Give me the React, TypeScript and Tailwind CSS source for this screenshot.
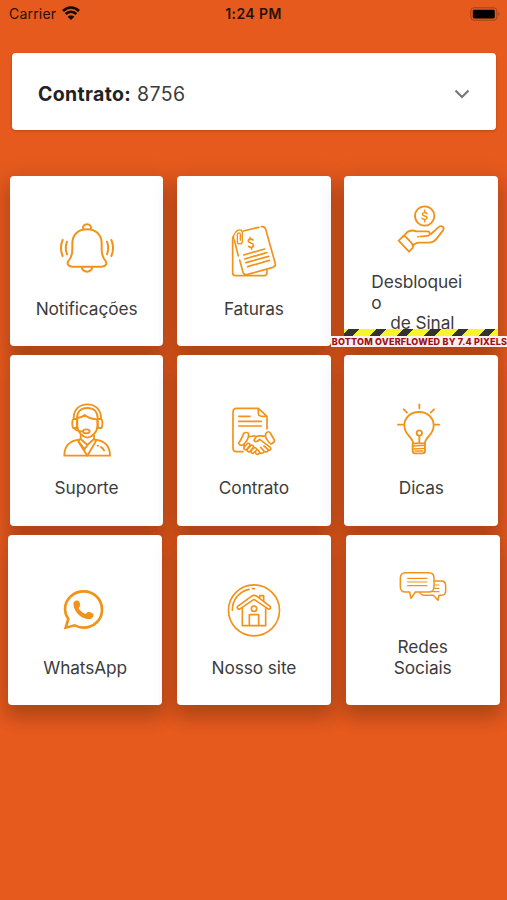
import React from 'react';

interface IconProps {
  viewBox: string;
  strokeWidth?: number;
  children: React.ReactNode;
}

const LineIcon: React.FC<IconProps> = ({ viewBox, strokeWidth = 5, children }) => (
  <svg
    viewBox={viewBox}
    className="h-[60px] w-[60px] shrink-0 text-[#f1921a]"
    fill="none"
    stroke="currentColor"
    strokeWidth={strokeWidth}
    strokeLinecap="round"
    strokeLinejoin="round"
  >
    {children}
  </svg>
);

const BellIcon = () => (
  <LineIcon viewBox="170 144 180 180" strokeWidth={6}>
    <path d="M216 238V220C216 194 234 178 260 178C286 178 304 194 304 220V238C304 258 309 266 317 275C321 284 313 290 304 290H216C207 290 199 284 203 275C211 266 216 258 216 238Z" />
    <path d="M249 178C245 168 252 163 260 163C268 163 275 168 271 178" />
    <path d="M244 292C246 300 252 305 260 305C268 305 274 300 276 292" />
    <path d="M187 210C180 226 180 242 187 258M200 215C195 228 195 240 200 253M333 210C340 226 340 242 333 258M320 215C325 228 325 240 320 253" />
  </LineIcon>
);

const InvoiceIcon = () => (
  <LineIcon viewBox="162 144 180 180">
    <path d="M220 183L266 172M274 170C282 169 285 172 287 178L316 281C317 287 315 290 309 292L230 314C224 315 221 313 219 307L209 270M205 258L194 214" />
    <path d="M190 198L188 206V309C188 314 191 317 196 317H283C289 317 291 313 291 307V300" />
    <path d="M194 213C188 203 191 194 196 188C201 178 216 176 217 188V215C216 224 202 224 202 215V194C203 187 211 187 211 194V211" strokeWidth={4} />
    <path d="M249 210C245 205 234 207 235 214C237 221 249 217 250 225C251 233 241 234 236 229M241 208L240 203M244 232L245 237" />
    <path d="M221 255L284 237M224 267L290 248M228 278L296 259M233 290L298 271" />
  </LineIcon>
);

const HandMoneyIcon = () => (
  <LineIcon viewBox="184 86 180 180" strokeWidth={5.5}>
    <circle cx="285" cy="137" r="29" />
    <path d="M292 130C288 125 278 126 278 132C278 139 293 135 292 143C291 149 281 149 277 144M285 125V120M285 149V154" strokeWidth={4.5} />
    <path d="M220 199L232 186C240 180 250 179 260 183H294C302 184 303 193 296 196L272 199M265 199H266" />
    <path d="M304 191L326 171C335 163 346 170 340 180L321 205C314 214 307 217 297 217H268C260 217 255 219 249 227" />
    <path d="M220 198L207 211L238 244L250 232C252 224 249 222 244 216L230 201C226 197 223 196 220 198Z" />
  </LineIcon>
);

const SupportIcon = () => (
  <LineIcon viewBox="170 144 180 180" strokeWidth={5.5}>
    <path d="M220 204C220 178 238 163 261 163C284 163 302 178 302 204M230 205C230 184 243 174 261 174C279 174 292 184 292 205" />
    <path d="M230 207H220C214 209 215 230 219 234H229ZM292 207H302C308 209 307 230 303 234H293Z" />
    <path d="M231 204C241 203 248 200 253 195C263 203 277 208 291 208M231 207V229C232 247 247 261 261 263C275 261 291 247 291 229V208" />
    <path d="M223 235C224 240 231 243 246 244" />
    <ellipse cx="258" cy="244" rx="10" ry="6" />
    <path d="M241 256V267L261 285L281 267V256M241 266L234 273L253 298M281 266L287 273L261 317L234 275M261 286L252 298" />
    <path d="M235 269C207 273 192 289 192 317H329C329 289 314 273 286 269" />
    <path d="M292 287H293M302 291C306 294 309 297 311 301" strokeWidth={6} />
  </LineIcon>
);

const ContractIcon = () => (
  <LineIcon viewBox="162 144 180 180">
    <path d="M219 305H199C192 305 189 301 189 294V186C189 179 193 175 200 175H265L291 199V237M265 175V190C265 197 269 199 276 199H291" />
    <path d="M206 199H240M206 214H274M206 228H274" />
    <path d="M221 250C226 246 235 247 236 252C236 262 229 276 220 284C214 289 205 283 206 279C212 272 217 260 221 250Z" />
    <path d="M288 250C292 244 297 244 301 249L313 270C316 277 307 280 303 282C295 277 287 264 286 257Z" />
    <path d="M236 260C244 260 249 257 255 258M286 258C275 260 267 254 259 260L252 270C254 278 263 275 269 268L301 292C305 299 298 303 294 298L282 288M294 298C295 306 287 308 282 303L272 292M282 303C282 311 274 312 269 307L263 299M269 307C267 314 261 315 257 309" />
    <path d="M222 284V290M231 282L223 291C219 299 227 302 231 297L239 287C242 280 234 278 231 282ZM242 287L232 298C230 306 238 308 242 302L250 293C252 286 246 284 242 287ZM251 294L243 303C242 310 249 313 253 307L260 300C261 294 255 291 251 294Z" />
  </LineIcon>
);

const BulbIcon = () => (
  <LineIcon viewBox="163 144 180 180" strokeWidth={5.5}>
    <path d="M229 279C229 263 203 254 203 227C203 202 222 186 247 186C272 186 291 202 291 227C291 254 265 263 265 279" />
    <circle cx="248" cy="249" r="8" />
    <path d="M248 258V279" />
    <path d="M228 280H265V304C265 308 262 310 258 310H235C230 310 228 307 228 303Z" />
    <path d="M229 288L264 286M229 297L264 295M235 303H259" strokeWidth={4} />
    <path d="M248 163V175M201 178L211 188M292 178L282 188M184 224H199M294 224H308" />
  </LineIcon>
);

const WhatsAppIcon = () => (
  <LineIcon viewBox="166 144 180 180" strokeWidth={8}>
    <path d="M198 293L206 267C199 257 196 248 196 238C196 207 222 184 252 184C284 184 307 209 307 239C307 270 282 293 251 293C242 293 233 290 225 286Z" strokeLinejoin="miter" />
    <path
      d="M223 215C229 210 236 210 239 215L242 226C242 230 237 232 237 235C241 242 248 248 256 251C260 252 263 245 267 245C273 246 281 250 282 254C281 265 270 269 262 267C241 263 226 246 222 228C221 222 221 218 223 215Z"
      fill="currentColor"
      stroke="none"
    />
  </LineIcon>
);

const HouseIcon = () => (
  <LineIcon viewBox="162 144 180 180">
    <circle cx="252" cy="241" r="76.5" />
    <path d="M187 241C187 209 208 184 237 178M247 176H253" />
    <path d="M203 229L244 199C250 195 255 195 261 199L300 229C304 235 298 240 292 235L252 208L212 235C206 240 199 235 203 229Z" />
    <path d="M217 235V287H287V235M238 286V254H266V286M269 204V197H281V213" />
    <circle cx="252" cy="236" r="8" />
  </LineIcon>
);

const ChatIcon = () => (
  <LineIcon viewBox="167 79 180 180" strokeWidth={4.5}>
    <path d="M205 126H274C284 126 290 132 290 142V168C290 178 284 184 274 184H234L221 203L217 184H205C195 184 189 178 189 168V142C189 132 195 126 205 126Z" />
    <path d="M291 151H311C320 151 325 156 325 165V180C325 189 320 194 311 194H305L302 209L288 194H264C256 194 250 191 248 186" />
    <path d="M211 143H269M211 154H269M211 165H269M292 163H305M292 173H305M286 183H305" strokeWidth={3.5} />
  </LineIcon>
);

interface MenuCardProps {
  icon: React.ReactNode;
  label: string;
}

const MenuCard: React.FC<MenuCardProps> = ({ icon, label }) => (
  <div className="flex h-[170.5px] w-[153.7px] flex-col items-center justify-end rounded-[4px] bg-white pb-[26.5px] shadow-[0_12px_17px_2px_rgba(0,0,0,0.14),0_5px_22px_4px_rgba(0,0,0,0.12)]">
    {icon}
    <span className="mt-[20.5px] whitespace-pre-line text-center text-[17.3px] leading-[20.7px] tracking-[-0.1px]">
      {label}
    </span>
  </div>
);

const OverflowCard = () => (
  <div className="h-[170.5px] w-[153.7px] rounded-[4px] bg-white pt-[23px] shadow-[0_12px_17px_2px_rgba(0,0,0,0.14),0_5px_22px_4px_rgba(0,0,0,0.12)]">
    <div className="flex h-[130px] flex-col items-center overflow-hidden">
      <HandMoneyIcon />
      <p className="mt-[13.5px] w-[100px] whitespace-pre text-[17.3px] leading-[20.7px] tracking-[-0.1px]">
        {'Desbloquei\no\n    de Sinal'}
      </p>
    </div>
    {/* debug stripe of the overflowing column */}
    <div className="h-[7px] bg-[repeating-linear-gradient(135deg,#f8f42c_0px,#f8f42c_3.5px,#333_3.5px,#333_10.7px,#f8f42c_10.7px,#f8f42c_19.3px)]" />
    <div className="-ml-[13.7px] h-[11px] w-[176.5px] whitespace-nowrap bg-[#fdf3ef] pl-px text-[9px] font-extrabold leading-[11px] tracking-[0.2px] text-[#a01018]">
      BOTTOM OVERFLOWED BY 7.4 PIXELS
    </div>
  </div>
);

const StatusBar = () => (
  <header className="grid h-[28px] grid-cols-3 items-center pl-[9px] pr-[7px] text-[14px] text-[#2a1004]">
    <div className="-mt-px flex items-center gap-[6px]">
      <span className="tracking-[0.2px]">Carrier</span>
      <svg viewBox="0 0 54 42" className="-mt-px h-[14px] w-[18px]" fill="none" stroke="#150802" strokeWidth="8">
        <path d="M3 15C17 1 37 1 51 15M11 24C20 15 34 15 43 24" />
        <path d="M27 42L17 32C22 27 32 27 37 32Z" fill="#150802" stroke="none" />
      </svg>
    </div>
    <span className="-ml-[2px] -mt-px text-center font-semibold tracking-[0.4px]">1:24 PM</span>
    <svg viewBox="0 0 30 14" className="-mt-px h-[14px] w-[30px] justify-self-end">
      <rect x="0.9" y="0.8" width="26" height="12.4" rx="3" fill="none" stroke="#a04218" />
      <rect x="2.8" y="2.7" width="22" height="8.7" rx="1.4" fill="#000" />
      <path d="M28.3 5V9C29.8 8.5 29.8 5.5 28.3 5Z" fill="#a04218" />
    </svg>
  </header>
);

export default function App() {
  return (
    <div className="h-[900px] w-[507px] overflow-hidden bg-[#e65a1e] font-['Inter',sans-serif] text-[#3c3c3c]">
      <StatusBar />

      <button
        type="button"
        className="ml-[12px] mt-[24.5px] flex h-[77px] w-[484px] items-center justify-between rounded-[4px] bg-white pl-[26px] pr-[26px] pt-[6px] text-left text-[19.5px] tracking-[0.35px] shadow-[0_1px_3px_rgba(0,0,0,0.2)]"
      >
        <span className="pt-[2px]">
          <strong className="font-bold text-[#222]">Contrato:</strong> 8756
        </span>
        <svg viewBox="0 0 16 10" className="h-[10px] w-[16px]" fill="none" stroke="#777" strokeWidth="2.2">
          <path d="M1.5 1.5L8 8L14.5 1.5" />
        </svg>
      </button>

      <main className="mt-[46px] flex flex-col gap-[9.2px]">
        <div className="flex gap-[13.7px] pl-[9.7px]">
          <MenuCard icon={<BellIcon />} label="Notificações" />
          <MenuCard icon={<InvoiceIcon />} label="Faturas" />
          <OverflowCard />
        </div>
        <div className="flex gap-[13.7px] pl-[9.7px]">
          <MenuCard icon={<SupportIcon />} label="Suporte" />
          <MenuCard icon={<ContractIcon />} label="Contrato" />
          <MenuCard icon={<BulbIcon />} label="Dicas" />
        </div>
        <div className="flex gap-[15.1px] pl-[8.3px]">
          <MenuCard icon={<WhatsAppIcon />} label="WhatsApp" />
          <MenuCard icon={<HouseIcon />} label="Nosso site" />
          <MenuCard icon={<ChatIcon />} label={'Redes\nSociais'} />
        </div>
      </main>
    </div>
  );
}
